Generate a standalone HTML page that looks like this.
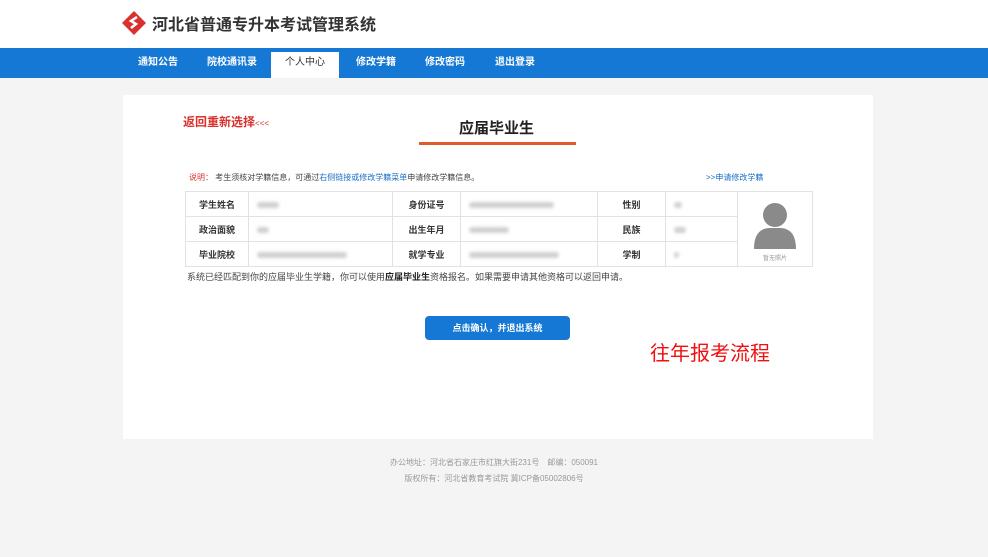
<!DOCTYPE html>
<html><head><meta charset="utf-8"><style>
*{margin:0;padding:0;box-sizing:border-box}
body{width:988px;height:557px;overflow:hidden;background:#f4f4f4;font-family:"Liberation Sans","Noto Sans CJK SC",sans-serif;position:relative}
.top{position:absolute;left:0;top:0;width:988px;height:48px;background:#fff}
.logo{position:absolute;left:122px;top:11px;width:24px;height:24px}
.title{position:absolute;left:152px;top:11px;font-size:16px;font-weight:bold;color:#333}
.nav{position:absolute;left:0;top:48px;width:988px;height:30px;background:#1478d4}
.nav span{position:absolute;top:0;height:30px;line-height:30px;font-size:10px;color:#fff;font-weight:bold}
.nav .act{background:#fff;color:#333;top:4px;height:26px;line-height:22px;text-align:center;width:68px;left:271px;font-weight:normal}
.card{position:absolute;left:123px;top:95px;width:750px;height:344px;background:#fff}
.abs{position:absolute}
table{position:absolute;left:185px;top:191px;border-collapse:collapse}
td{border:1px solid #e2e2e2;height:25px;font-size:9px;color:#333;font-weight:bold}
td.l{text-align:center}
.bl{display:inline-block;height:6px;background:#d0d0d0;border-radius:3px;filter:blur(1.5px);margin-left:8px;vertical-align:middle}
.foot{position:absolute;width:988px;text-align:center;font-size:8px;color:#999}
</style></head><body>
<div class="top"></div>
<svg class="logo" viewBox="0 0 24 24"><polygon points="12,0 24,12 12,24 0,12" fill="#d9322e"/><path d="M15 6 L9 10 L14 13 L9 17" stroke="#fff" stroke-width="2.5" fill="none"/></svg>
<div class="title">河北省普通专升本考试管理系统</div>
<div class="nav">
<span style="left:138px">通知公告</span>
<span style="left:207px">院校通讯录</span>
<span class="act">个人中心</span>
<span style="left:356px">修改学籍</span>
<span style="left:425px">修改密码</span>
<span style="left:495px">退出登录</span>
</div>
<div class="card"></div>
<div class="abs" style="left:183px;top:113px;font-size:12px;font-weight:bold;color:#d9322e">返回重新选择<span style="font-size:8px;font-weight:normal">&lt;&lt;&lt;</span></div>
<div class="abs" style="left:459px;top:117px;font-size:15px;font-weight:bold;color:#222">应届毕业生</div>
<div class="abs" style="left:419px;top:142px;width:157px;height:3px;background:#e05a2b"></div>
<div class="abs" style="left:189px;top:172px;font-size:8px;color:#444"><span style="color:#d9322e">说明：</span> 考生须核对学籍信息，可通过<span style="color:#1a6fc9">右侧链接或修改学籍菜单</span>申请修改学籍信息。</div>
<div class="abs" style="left:706px;top:172px;font-size:8px;color:#1a6fc9">&gt;&gt;申请修改学籍</div>
<table>
<tr><td class="l" style="width:63px">学生姓名</td><td style="width:144px"><span class="bl" style="width:22px"></span></td><td class="l" style="width:68px">身份证号</td><td style="width:137px"><span class="bl" style="width:85px"></span></td><td class="l" style="width:68px">性别</td><td style="width:72px"><span class="bl" style="width:8px"></span></td><td rowspan="3" style="width:75px;text-align:center;vertical-align:bottom">
<svg width="52" height="52" viewBox="0 0 52 52" style="display:block;margin:0 auto"><circle cx="26" cy="16" r="12" fill="#8a8a8a"/><path d="M5 50 Q5 30 20 29 L32 29 Q47 30 47 50 Z" fill="#8a8a8a"/></svg>
<div style="font-size:6px;color:#999;font-weight:normal;padding:2px 0 4px">暂无照片</div></td></tr>
<tr><td class="l">政治面貌</td><td><span class="bl" style="width:12px"></span></td><td class="l">出生年月</td><td><span class="bl" style="width:40px"></span></td><td class="l">民族</td><td><span class="bl" style="width:12px"></span></td></tr>
<tr><td class="l">毕业院校</td><td><span class="bl" style="width:90px"></span></td><td class="l">就学专业</td><td><span class="bl" style="width:90px"></span></td><td class="l">学制</td><td><span class="bl" style="width:5px"></span></td></tr>
</table>
<div class="abs" style="left:187px;top:270px;font-size:9px;color:#444">系统已经匹配到你的应届毕业生学籍，你可以使用<b style="color:#222">应届毕业生</b>资格报名。如果需要申请其他资格可以返回申请。</div>
<div class="abs" style="left:425px;top:316px;width:145px;height:24px;background:#1478d4;border-radius:4px;color:#fff;font-size:9px;font-weight:bold;text-align:center;line-height:24px">点击确认，并退出系统</div>
<div class="abs" style="left:650px;top:337px;font-size:20px;color:#f01010">往年报考流程</div>
<div class="foot" style="top:457px;left:0">办公地址：河北省石家庄市红旗大街231号　邮编：050091</div>
<div class="foot" style="top:473px;left:0">版权所有：河北省教育考试院 冀ICP备05002806号</div>
</body></html>
